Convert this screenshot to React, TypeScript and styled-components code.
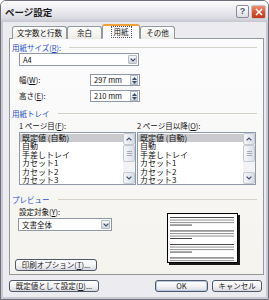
import styled, { createGlobalStyle } from "styled-components";

const GlobalStyle = createGlobalStyle`
  html, body { margin: 0; padding: 0; background: #ffffff; }
  * { box-sizing: border-box; }
`;

const FONT = `"Noto Sans CJK JP", "Noto Sans", "Liberation Sans", sans-serif`;

const Chevron = ({ up }: { up?: boolean }) => (
  <svg width="6" height="4" viewBox="0 0 6 4">
    <path
      d={up ? "M0.6 3.4 L3 1 L5.4 3.4" : "M0.6 0.6 L3 3 L5.4 0.6"}
      fill="none"
      stroke="#3f4f70"
      strokeWidth="1.2"
    />
  </svg>
);

const Tri = ({ up }: { up?: boolean }) => (
  <svg width="5" height="3" viewBox="0 0 5 3">
    <path d={up ? "M0 3 L2.5 0 L5 3 Z" : "M0 0 L2.5 3 L5 0 Z"} fill="#3f4f70" />
  </svg>
);

function Combo(props: { value: string; width: number; indent?: number }) {
  return (
    <ComboBox $width={props.width} $indent={props.indent ?? 0}>
      <ComboText>{props.value}</ComboText>
      <DropButton>
        <Chevron />
      </DropButton>
    </ComboBox>
  );
}

function Spin(props: { label: React.ReactNode; value: string }) {
  return (
    <SpinRow>
      <FieldLabel>{props.label}</FieldLabel>
      <SpinBox>
        <ComboText>{props.value}</ComboText>
        <SpinButtons>
          <SpinHalf>
            <Tri up />
          </SpinHalf>
          <SpinHalf>
            <Tri />
          </SpinHalf>
        </SpinButtons>
      </SpinBox>
    </SpinRow>
  );
}

const trays = ["既定値 (自動)", "自動", "手差しトレイ", "カセット1", "カセット2", "カセット3"];

function TrayList(props: { width: number }) {
  return (
    <ListBox $width={props.width}>
      <Items>
        {trays.map((t, i) => (
          <Item key={t} $selected={i === 0}>
            {t}
          </Item>
        ))}
      </Items>
      <ScrollBar>
        <ScrollButton>
          <Chevron up />
        </ScrollButton>
        <Thumb>
          <Grip />
        </Thumb>
        <Track />
        <ScrollButton>
          <Chevron />
        </ScrollButton>
      </ScrollBar>
    </ListBox>
  );
}

function PageThumb() {
  const groups = [3, 16.5, 30, 43.5];
  return (
    <Page>
      <svg width="69" height="48" viewBox="0 0 69 48">
        {groups.map((y) => (
          <g key={y}>
            <rect x="2" y={y} width="64" height="0.9" fill="#333" />
            <rect x="2" y={y + 2.5} width="64" height="1.1" fill="#9a9a9a" />
            <rect x="2" y={y + 5} width="64" height="1.1" fill="#9a9a9a" />
            <rect x="2" y={y + 7.6} width="22" height="0.9" fill="#333" />
          </g>
        ))}
      </svg>
    </Page>
  );
}

export default function App() {
  return (
    <>
      <GlobalStyle />
      <Window>
        <TitleBar>
          <Title>ページ設定</Title>
          <CaptionButton>?</CaptionButton>
          <CloseButton>
            <svg width="8" height="8" viewBox="0 0 8 8">
              <path d="M1 1 L7 7 M7 1 L1 7" stroke="#fff" strokeWidth="1.6" />
            </svg>
          </CloseButton>
        </TitleBar>
        <Body>
          <Tabs>
            <Tab $width={55}>文字数と行数</Tab>
            <Tab $width={35}>余白</Tab>
            <Tab $width={38} $active>
              <Focus>用紙</Focus>
            </Tab>
            <Tab $width={35}>その他</Tab>
          </Tabs>
          <Panel>
            <Heading>
              用紙サイズ(<u>R</u>):
            </Heading>
            <Combo value="A4" width={120} indent={7} />
            <Fields>
              <Spin
                label={
                  <>
                    幅(<u>W</u>):
                  </>
                }
                value="297 mm"
              />
              <Spin
                label={
                  <>
                    高さ(<u>E</u>):
                  </>
                }
                value="210 mm"
              />
            </Fields>
            <Heading $gap={7}>用紙トレイ</Heading>
            <TrayLabels>
              <TrayLabel $width={121}>
                1 ページ目(<u>F</u>):
              </TrayLabel>
              <TrayLabel $width={122}>
                2 ページ目以降(<u>O</u>):
              </TrayLabel>
            </TrayLabels>
            <Lists>
              <TrayList width={120} />
              <TrayList width={122} />
            </Lists>
            <Heading $gap={10}>プレビュー</Heading>
            <PreviewRow>
              <PreviewLeft>
                <TargetLabel>
                  設定対象(<u>Y</u>):
                </TargetLabel>
                <Combo value="文書全体" width={94} indent={6} />
                <Button $width={82} $indent={3}>
                  印刷オプション(<u>T</u>)...
                </Button>
              </PreviewLeft>
              <PageThumb />
            </PreviewRow>
          </Panel>
          <Footer>
            <Button $width={90}>
              既定値として設定(<u>D</u>)...
            </Button>
            <Spacer />
            <Button $width={53} $default>
              OK
            </Button>
            <Button $width={50}>キャンセル</Button>
          </Footer>
        </Body>
      </Window>
    </>
  );
}

const Window = styled.div`
  width: 269px;
  height: 300px;
  display: flex;
  flex-direction: column;
  background: #ecebef;
  border: 1px solid #6e6e7a;
  border-radius: 6px 6px 0 0;
  overflow: hidden;
  font-family: ${FONT};
  font-size: 7.5px;
  color: #111;
`;

const TitleBar = styled.div`
  height: 21px;
  flex: none;
  display: flex;
  align-items: center;
  gap: 2px;
  padding: 0 2px 0 4px;
  background: linear-gradient(#fdfdfe 0%, #efeff3 35%, #dcdce4 80%, #c6c6d0 100%);
`;

const Title = styled.div`
  flex: 1;
  font-size: 9.5px;
  font-weight: bold;
  color: #1a1a1a;
  line-height: 12px;
`;

const CaptionButton = styled.div`
  width: 13px;
  height: 13px;
  border: 1px solid #8c8c98;
  border-radius: 2px;
  background: linear-gradient(#ffffff, #dcdce4);
  color: #4c5a78;
  font-family: "Liberation Sans", sans-serif;
  font-weight: bold;
  font-size: 9px;
  line-height: 11px;
  text-align: center;
`;

const CloseButton = styled.div`
  width: 15px;
  height: 14px;
  border: 1px solid #c4c4cc;
  border-radius: 2px;
  background: linear-gradient(#ee8f74, #d6502f 55%, #c2391a);
  display: flex;
  align-items: center;
  justify-content: center;
`;

const Body = styled.div`
  flex: 1;
  display: flex;
  flex-direction: column;
  padding: 2px 2px 5px 6px;
  border: 2px solid #c9c9d3;
  border-top: none;
`;

const Tabs = styled.div`
  height: 15px;
  display: flex;
  align-items: flex-end;
  padding-left: 3px;
  margin-bottom: -1px;
`;

const Tab = styled.div<{ $width: number; $active?: boolean }>`
  position: relative;
  z-index: ${(p) => (p.$active ? 1 : 0)};
  width: ${(p) => p.$width}px;
  height: ${(p) => (p.$active ? 15 : 13)}px;
  display: flex;
  align-items: center;
  justify-content: center;
  border: 1px solid #919b9c;
  border-bottom: ${(p) => (p.$active ? "1px solid #fcfcfe" : "none")};
  border-top: ${(p) => (p.$active ? "2px solid #f2a13a" : "1px solid #919b9c")};
  border-radius: 3px 3px 0 0;
  background: ${(p) => (p.$active ? "#fcfcfe" : "linear-gradient(#ffffff, #ecebe6)")};
  line-height: 10px;
  white-space: nowrap;
`;

const Focus = styled.span`
  outline: 1px dotted #555;
  padding: 0 2px;
`;

const Panel = styled.div`
  height: 237px;
  flex: none;
  display: flex;
  flex-direction: column;
  padding: 4px 7px 3px 2px;
  border: 1px solid #919b9c;
  background: linear-gradient(#fcfcfe, #f4f3ee);
`;

const Heading = styled.div<{ $gap?: number }>`
  height: 9px;
  margin-top: ${(p) => p.$gap ?? 0}px;
  display: flex;
  align-items: center;
  color: #1f4fcf;
  line-height: 9px;
  white-space: nowrap;

  &::after {
    content: "";
    flex: 1;
    margin-left: 8px;
    margin-right: -1px;
    border-top: 1px solid #d2d2c8;
  }
`;

const ComboBox = styled.div<{ $width: number; $indent: number }>`
  width: ${(p) => p.$width}px;
  height: 13px;
  margin: 1px 0 0 ${(p) => p.$indent}px;
  display: flex;
  align-items: center;
  border: 1px solid #8e98a6;
  background: #fff;
  padding-right: 1px;
`;

const ComboText = styled.div`
  flex: 1;
  padding-left: 3px;
  line-height: 10px;
  white-space: nowrap;
`;

const DropButton = styled.div`
  width: 9px;
  height: 9px;
  display: flex;
  align-items: center;
  justify-content: center;
  border: 1px solid #b6bcc6;
  border-radius: 1px;
  background: linear-gradient(#f7f8fa, #cfd4dc);
`;

const Fields = styled.div`
  display: flex;
  flex-direction: column;
  gap: 4px;
  margin-top: 8px;
  padding-left: 7px;
`;

const SpinRow = styled.div`
  height: 12px;
  display: flex;
  align-items: center;
`;

const FieldLabel = styled.div`
  width: 71px;
  line-height: 10px;
`;

const SpinBox = styled.div`
  width: 50px;
  height: 12px;
  display: flex;
  align-items: center;
  border: 1px solid #8e98a6;
  background: #fff;
  padding-right: 1px;
`;

const SpinButtons = styled.div`
  width: 8px;
  height: 10px;
  display: flex;
  flex-direction: column;
  border: 1px solid #b6bcc6;
  background: linear-gradient(#f7f8fa, #cfd4dc);
`;

const SpinHalf = styled.div`
  flex: 1;
  display: flex;
  align-items: center;
  justify-content: center;
`;

const TrayLabels = styled.div`
  height: 9px;
  margin-top: 3px;
  display: flex;
  padding-left: 7px;
`;

const TrayLabel = styled.div<{ $width: number }>`
  width: ${(p) => p.$width}px;
  line-height: 9px;
  white-space: nowrap;
`;

const Lists = styled.div`
  height: 53px;
  margin-top: 2px;
  display: flex;
  gap: 1px;
  padding-left: 7px;
`;

const ListBox = styled.div<{ $width: number }>`
  width: ${(p) => p.$width}px;
  height: 53px;
  display: flex;
  border: 1px solid #8e98a6;
  background: #fff;
`;

const Items = styled.div`
  flex: 1;
  display: flex;
  flex-direction: column;
  padding-top: 1px;
`;

const Item = styled.div<{ $selected?: boolean }>`
  height: 8.4px;
  line-height: 8.4px;
  font-size: 8px;
  padding-left: 2px;
  white-space: nowrap;
  background: ${(p) => (p.$selected ? "#c9c9ce" : "transparent")};
`;

const ScrollBar = styled.div`
  width: 12px;
  display: flex;
  flex-direction: column;
  background: #f3f3f5;
`;

const ScrollButton = styled.div`
  height: 12px;
  display: flex;
  align-items: center;
  justify-content: center;
  border: 1px solid #c4cad4;
  border-radius: 2px;
  background: linear-gradient(90deg, #f6f7f9, #d9dde4);
`;

const Thumb = styled.div`
  height: 17px;
  display: flex;
  align-items: center;
  justify-content: center;
  border: 1px solid #c4cad4;
  border-radius: 2px;
  background: linear-gradient(90deg, #f6f7f9, #dcdfe6);
`;

const Grip = styled.div`
  width: 5px;
  height: 5px;
  border-top: 1px solid #a8aeb8;
  border-bottom: 1px solid #a8aeb8;
  position: relative;

  &::after {
    content: "";
    position: absolute;
    left: 0;
    right: 0;
    top: 1px;
    border-top: 1px solid #a8aeb8;
  }
`;

const Track = styled.div`
  flex: 1;
`;

const PreviewRow = styled.div`
  height: 64px;
  margin-top: 3px;
  display: flex;
`;

const PreviewLeft = styled.div`
  width: 155px;
  display: flex;
  flex-direction: column;
`;

const TargetLabel = styled.div`
  height: 9px;
  line-height: 9px;
  padding-left: 7px;
  margin-bottom: 1px;
`;

const Page = styled.div`
  width: 71px;
  height: 50px;
  margin-top: 6px;
  border: 1px solid #000;
  background: #fff;
  box-shadow: 2px 2px 0 #1a1a1a;
`;

const Button = styled.div<{ $width: number; $indent?: number; $default?: boolean }>`
  width: ${(p) => p.$width}px;
  height: 12px;
  margin-left: ${(p) => p.$indent ?? 0}px;
  margin-top: auto;
  display: flex;
  align-items: center;
  justify-content: center;
  border: 1px solid #4e5868;
  border-radius: 3px;
  background: linear-gradient(#ffffff, #f2f2f5 55%, #d8d8e0);
  box-shadow: ${(p) => (p.$default ? "inset 0 0 0 1px #b8c8e8" : "none")};
  line-height: 10px;
  white-space: nowrap;
  color: #222;
`;

const Footer = styled.div`
  height: 12px;
  margin-top: 5px;
  display: flex;
  gap: 4px;
  padding-right: 2px;
`;

const Spacer = styled.div`
  flex: 1;
`;
